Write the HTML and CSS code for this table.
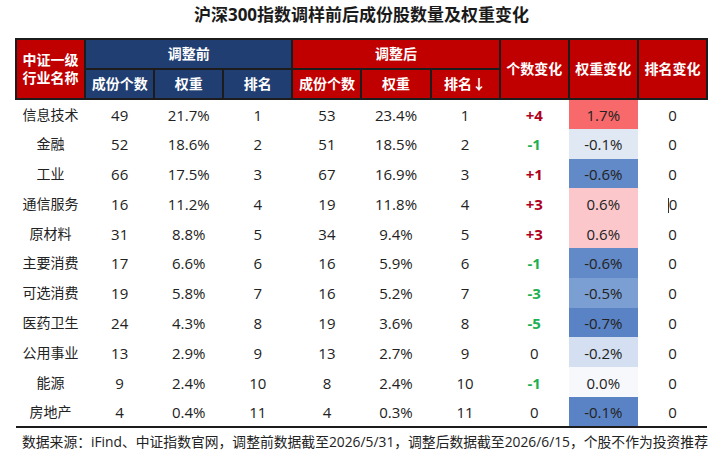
FILE: index.html
```html
<!DOCTYPE html>
<html lang="zh">
<head>
<meta charset="utf-8">
<link rel="stylesheet" href="styles.css">
</head>
<body>
<div class="page">
  <h1 class="title">沪深300指数调样前后成份股数量及权重变化</h1>
  <table class="grid">
    <colgroup>
      <col><col><col><col><col><col><col><col><col><col>
    </colgroup>
    <thead>
      <tr class="h1">
        <th rowspan="2" class="red">中证一级<br>行业名称</th>
        <th colspan="3" class="blue">调整前</th>
        <th colspan="3" class="red">调整后</th>
        <th rowspan="2" class="red">个数变化</th>
        <th rowspan="2" class="red">权重变化</th>
        <th rowspan="2" class="red">排名变化</th>
      </tr>
      <tr class="h2">
        <th class="blue">成份个数</th>
        <th class="blue">权重</th>
        <th class="blue">排名</th>
        <th class="red">成份个数</th>
        <th class="red">权重</th>
        <th class="red">排名↓</th>
      </tr>
    </thead>
    <tbody>
      <tr><td class="name">信息技术</td><td>49</td><td>21.7%</td><td>1</td><td>53</td><td>23.4%</td><td>1</td><td class="up">+4</td><td class="w-r1">1.7%</td><td>0</td></tr>
      <tr><td class="name">金融</td><td>52</td><td>18.6%</td><td>2</td><td>51</td><td>18.5%</td><td>2</td><td class="dn">-1</td><td class="w-b1">-0.1%</td><td>0</td></tr>
      <tr><td class="name">工业</td><td>66</td><td>17.5%</td><td>3</td><td>67</td><td>16.9%</td><td>3</td><td class="up">+1</td><td class="w-b6">-0.6%</td><td>0</td></tr>
      <tr><td class="name">通信服务</td><td>16</td><td>11.2%</td><td>4</td><td>19</td><td>11.8%</td><td>4</td><td class="up">+3</td><td class="w-r2">0.6%</td><td><span class="caret"></span>0</td></tr>
      <tr><td class="name">原材料</td><td>31</td><td>8.8%</td><td>5</td><td>34</td><td>9.4%</td><td>5</td><td class="up">+3</td><td class="w-r2">0.6%</td><td>0</td></tr>
      <tr><td class="name">主要消费</td><td>17</td><td>6.6%</td><td>6</td><td>16</td><td>5.9%</td><td>6</td><td class="dn">-1</td><td class="w-b6">-0.6%</td><td>0</td></tr>
      <tr><td class="name">可选消费</td><td>19</td><td>5.8%</td><td>7</td><td>16</td><td>5.2%</td><td>7</td><td class="dn">-3</td><td class="w-b5">-0.5%</td><td>0</td></tr>
      <tr><td class="name">医药卫生</td><td>24</td><td>4.3%</td><td>8</td><td>19</td><td>3.6%</td><td>8</td><td class="dn">-5</td><td class="w-b7">-0.7%</td><td>0</td></tr>
      <tr><td class="name">公用事业</td><td>13</td><td>2.9%</td><td>9</td><td>13</td><td>2.7%</td><td>9</td><td>0</td><td class="w-b2">-0.2%</td><td>0</td></tr>
      <tr><td class="name">能源</td><td>9</td><td>2.4%</td><td>10</td><td>8</td><td>2.4%</td><td>10</td><td class="dn">-1</td><td class="w-b0">0.0%</td><td>0</td></tr>
      <tr><td class="name">房地产</td><td>4</td><td>0.4%</td><td>11</td><td>4</td><td>0.3%</td><td>11</td><td>0</td><td class="w-b7">-0.1%</td><td>0</td></tr>
    </tbody>
  </table>
  <p class="note">数据来源：iFind、中证指数官网，调整前数据截至2026/5/31，调整后数据截至2026/6/15，个股不作为投资推荐</p>
</div>
</body>
</html>
```

FILE: styles.css
```css
html, body {
  margin: 0;
  padding: 0;
  background: #ffffff;
}
body {
  font-family: "Open Sans", "Noto Sans CJK SC", "Liberation Sans", sans-serif;
  color: #222222;
}
.page {
  width: 719px;
  height: 453px;
  padding: 4px 11px 0 15px;
  box-sizing: border-box;
}
.title {
  margin: 0 0 12px 0;
  font-size: 17px;
  line-height: 22px;
  font-weight: 700;
  text-align: center;
  color: #1a1a1a;
}
.grid {
  width: 693px;
  table-layout: fixed;
  border-collapse: collapse;
  font-size: 15px;
}
.grid th {
  color: #ffffff;
  font-weight: 700;
  font-size: 14px;
  line-height: 18px;
  border: 2px solid #1c1c1c;
  padding: 0;
  text-align: center;
}
.grid thead tr {
  height: 30px;
}
.grid th.red {
  background: #c00000;
}
.grid th.blue {
  background: #203e72;
}
.grid tbody tr {
  height: 29.8px;
}
.grid td {
  padding: 1px 0 0 0;
  text-align: center;
  line-height: 18px;
  color: #222222;
}
.grid td.name {
  font-size: 14px;
}
.grid tbody tr:last-child td {
  border-bottom: 2px solid #1c1c1c;
}
.grid td.up {
  color: #b0001c;
  font-weight: 700;
}
.grid td.dn {
  color: #1fb050;
  font-weight: 700;
}
.w-r1 { background: #f8696b; }
.w-r2 { background: #fcc7cb; }
.w-b0 { background: #f6f8fc; }
.w-b1 { background: #e0e8f4; }
.w-b2 { background: #d4e0f1; }
.w-b5 { background: #7c9fd3; }
.w-b6 { background: #6289c8; }
.w-b7 { background: #5a83c5; }
.caret {
  display: inline-block;
  width: 1px;
  height: 15px;
  background: #333333;
  vertical-align: -3px;
}
.note {
  margin: 4px 0 0 7px;
  font-size: 13.8px;
  line-height: 20px;
  color: #222222;
  white-space: nowrap;
}
```
